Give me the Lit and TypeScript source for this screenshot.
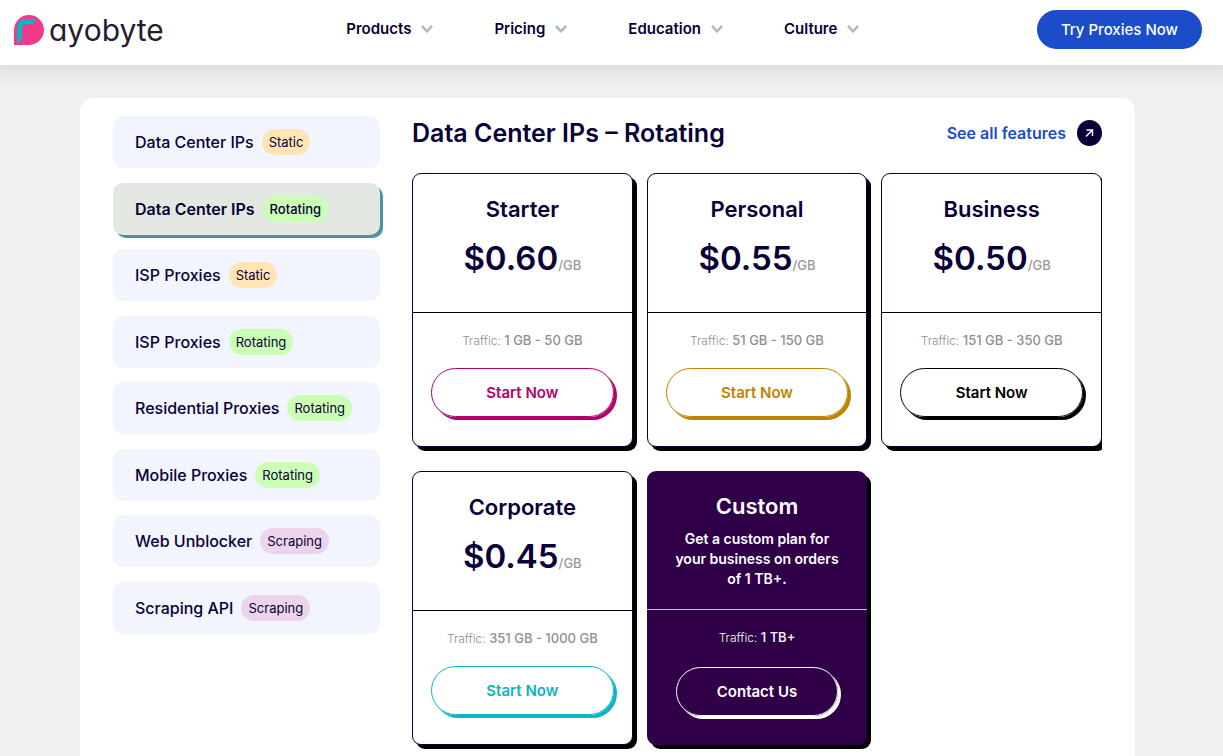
import { LitElement, html, css } from "lit";
import { customElement, property, state } from "lit/decorators.js";
import { classMap } from "lit/directives/class-map.js";

type Kind = "Static" | "Rotating" | "Scraping";

interface Product {
  name: string;
  kind: Kind;
}

interface Plan {
  name: string;
  price?: string;
  blurb?: string;
  traffic: string;
  action: string;
  tone: string;
}

const MENU = ["Products", "Pricing", "Education", "Culture"];

const PRODUCTS: Product[] = [
  { name: "Data Center IPs", kind: "Static" },
  { name: "Data Center IPs", kind: "Rotating" },
  { name: "ISP Proxies", kind: "Static" },
  { name: "ISP Proxies", kind: "Rotating" },
  { name: "Residential Proxies", kind: "Rotating" },
  { name: "Mobile Proxies", kind: "Rotating" },
  { name: "Web Unblocker", kind: "Scraping" },
  { name: "Scraping API", kind: "Scraping" },
];

const PLANS: Plan[] = [
  { name: "Starter", price: "$0.60", traffic: "1 GB - 50 GB", action: "Start Now", tone: "magenta" },
  { name: "Personal", price: "$0.55", traffic: "51 GB - 150 GB", action: "Start Now", tone: "gold" },
  { name: "Business", price: "$0.50", traffic: "151 GB - 350 GB", action: "Start Now", tone: "black" },
  { name: "Corporate", price: "$0.45", traffic: "351 GB - 1000 GB", action: "Start Now", tone: "teal" },
  {
    name: "Custom",
    blurb: "Get a custom plan for your business on orders of 1 TB+.",
    traffic: "1 TB+",
    action: "Contact Us",
    tone: "dark",
  },
];

@customElement("site-header")
export class SiteHeader extends LitElement {
  static styles = css`
    :host {
      display: block;
      position: relative;
      background: #fff;
      box-shadow: 0 -15px 25px 15px rgba(0, 0, 0, 0.14);
    }
    .bar {
      display: flex;
      align-items: center;
      justify-content: space-between;
      padding: 10px 21px 16px 14px;
    }
    .logo {
      display: flex;
      align-items: center;
      gap: 5px;
      color: #271c31;
      text-decoration: none;
    }
    .mark {
      display: block;
      width: 30px;
      height: 30px;
    }
    .word {
      font-size: 30px;
      line-height: 28px;
      font-feature-settings: "cv11";
    }
    .menu {
      display: flex;
      gap: 61px;
      padding: 0 0 2px 5px;
    }
    .item {
      display: flex;
      align-items: center;
      gap: 10px;
      padding: 0;
      border: 0;
      background: none;
      font: 600 15px/21px Inter, sans-serif;
      color: #080036;
      cursor: pointer;
    }
    .chevron {
      width: 12px;
      height: 8px;
      fill: none;
      stroke: #b9b9b9;
      stroke-width: 2.6;
    }
    .cta {
      padding: 0 24px;
      border-radius: 20px;
      background: #1b4dca;
      color: #fff;
      font-size: 15px;
      font-weight: 500;
      line-height: 39px;
      text-decoration: none;
      white-space: nowrap;
    }
  `;

  render() {
    return html`
      <header class="bar">
        <a class="logo" href="#" aria-label="Rayobyte home">
          <svg class="mark" viewBox="0 0 30 30" aria-hidden="true">
            <path fill="#f03a8c" d="M0 30V15A15 15 0 1 1 15 30Z" />
            <path
              fill="#0bb5c1"
              d="M3 27.4V13.5C3 7.5 6.2 4.2 12 4.2H21.8C21.8 7.4 19.8 9.2 16.6 9.2H13C9.7 9.2 8 10.8 8 14V22.8C8 25.7 6.2 27.4 3 27.4Z"
            />
          </svg>
          <span class="word">ayobyte</span>
        </a>
        <nav class="menu">
          ${MENU.map(
            (label) => html`
              <button class="item" type="button">
                ${label}
                <svg class="chevron" viewBox="0 0 12 8" aria-hidden="true">
                  <path d="M1 1L6 6.3L11 1" />
                </svg>
              </button>
            `
          )}
        </nav>
        <a class="cta" href="#">Try Proxies Now</a>
      </header>
    `;
  }
}

@customElement("product-list")
export class ProductList extends LitElement {
  @state() private selected = 1;

  static styles = css`
    :host {
      display: block;
    }
    .list {
      display: flex;
      flex-direction: column;
      justify-content: space-between;
      min-height: 518px;
    }
    .product {
      display: flex;
      align-items: center;
      gap: 8px;
      height: 52px;
      padding: 0 22px;
      border: 0;
      border-radius: 10px;
      background: #f2f4fe;
      color: #080036;
      font: 500 16px/24px Inter, sans-serif;
      text-align: left;
      white-space: nowrap;
      cursor: pointer;
    }
    .product.active {
      background: #e3e8e2;
      box-shadow: 3px 3px 0 #4d929f;
      font-weight: 600;
    }
    .tag {
      padding: 0 7px;
      border-radius: 13px;
      font-size: 13px;
      font-weight: 400;
      line-height: 26px;
    }
    .active .tag {
      font-weight: 500;
    }
    .static {
      background: #ffe5b4;
    }
    .rotating {
      background: #ccffb6;
    }
    .scraping {
      background: #ecd5ec;
    }
  `;

  render() {
    return html`
      <div class="list">
        ${PRODUCTS.map(
          (p, i) => html`
            <button
              type="button"
              class=${classMap({ product: true, active: i === this.selected })}
              @click=${() => (this.selected = i)}
            >
              <span>${p.name}</span><span class="tag ${p.kind.toLowerCase()}">${p.kind}</span>
            </button>
          `
        )}
      </div>
    `;
  }
}

@customElement("plan-card")
export class PlanCard extends LitElement {
  @property({ attribute: false }) plan!: Plan;

  static styles = css`
    :host {
      display: block;
    }
    .card {
      box-sizing: border-box;
      height: 100%;
      border: 1px solid #080036;
      border-radius: 9px;
      background: #fff;
      box-shadow: 4px 4px 0 #000;
      color: #080036;
      text-align: center;
    }
    .head {
      box-sizing: border-box;
      min-height: 139px;
      padding: 20px 18px;
      border-bottom: 1px solid #000;
    }
    .name {
      margin: 0;
      font-size: 22px;
      font-weight: 600;
      line-height: 30px;
    }
    .price {
      margin: 14px 0 0;
      font-size: 33px;
      font-weight: 600;
      line-height: 40px;
      white-space: nowrap;
    }
    .unit {
      color: #999;
      font-size: 13px;
      font-weight: 500;
    }
    .blurb {
      margin: 8px 0 0;
      padding: 0 8px;
      font-size: 14px;
      font-weight: 600;
      line-height: 20px;
    }
    .body {
      padding: 17px 18px 28px;
    }
    .traffic {
      margin: 0 0 17px;
      color: #8f8f8f;
      font-size: 13px;
      font-weight: 500;
      line-height: 20px;
      white-space: nowrap;
    }
    .label {
      font-size: 12px;
      font-weight: 300;
    }
    .action {
      display: block;
      border: 1px solid currentColor;
      border-radius: 25px;
      box-shadow: 3px 3px 0 currentColor;
      color: #fff;
      font-size: 15px;
      font-weight: 600;
      line-height: 47px;
      text-decoration: none;
    }
    .magenta .action {
      color: #b3006b;
    }
    .gold .action {
      color: #bf8300;
    }
    .black .action {
      color: #000;
    }
    .teal .action {
      color: #0bb5c1;
    }
    .dark {
      border: 0;
      background: #2f0047;
      color: #fff;
    }
    .dark .head {
      padding-bottom: 18px;
      border-color: #cbbfd1;
    }
    .dark .traffic {
      margin-bottom: 19px;
      color: #fff;
    }
    .dark .body {
      padding: 17px 29px 28px;
    }
  `;

  render() {
    const p = this.plan;
    return html`
      <article class="card ${p.tone}">
        <div class="head">
          <h3 class="name">${p.name}</h3>
          ${p.price
            ? html`<p class="price">${p.price}<span class="unit">/GB</span></p>`
            : html`<p class="blurb">${p.blurb}</p>`}
        </div>
        <div class="body">
          <p class="traffic"><span class="label">Traffic:</span> ${p.traffic}</p>
          <a class="action" href="#">${p.action}</a>
        </div>
      </article>
    `;
  }
}

@customElement("app-root")
export class AppRoot extends LitElement {
  static styles = css`
    :host {
      display: flex;
      flex-direction: column;
      min-height: 100vh;
      overflow: hidden;
      background: #f0f0f0;
      font-family: Inter, sans-serif;
    }
    .panel {
      display: grid;
      grid-template-columns: 267px minmax(0, 1fr);
      flex: 1;
      gap: 32px;
      align-items: start;
      margin: 33px 88px 0 80px;
      padding: 18px 33px 8px;
      border-radius: 13px 13px 0 0;
      background: #fff;
    }
    .top {
      display: flex;
      align-items: center;
      justify-content: space-between;
      margin-bottom: 23px;
    }
    .title {
      margin: 0;
      color: #080036;
      font-size: 25px;
      font-weight: 600;
      line-height: 34px;
    }
    .more {
      display: flex;
      align-items: center;
      gap: 11px;
      color: #1b4dca;
      font-size: 16px;
      font-weight: 600;
      line-height: 26px;
      text-decoration: none;
    }
    .arrow {
      width: 25px;
      height: 26px;
    }
    .plans {
      display: grid;
      grid-template-columns: repeat(3, minmax(0, 1fr));
      grid-auto-rows: minmax(274px, auto);
      gap: 24px 14px;
      overflow-x: clip;
    }
  `;

  render() {
    return html`
      <site-header></site-header>
      <main class="panel">
        <product-list></product-list>
        <section>
          <div class="top">
            <h2 class="title">Data Center IPs – Rotating</h2>
            <a class="more" href="#">
              See all features
              <svg class="arrow" viewBox="0 0 25 26" aria-hidden="true">
                <ellipse cx="12.5" cy="13" rx="12.5" ry="13" fill="#080036" />
                <path d="M9 16.5L15.5 10M9.5 10H15.5V16" fill="none" stroke="#fff" stroke-width="1.4" />
              </svg>
            </a>
          </div>
          <div class="plans">${PLANS.map((p) => html`<plan-card .plan=${p}></plan-card>`)}</div>
        </section>
      </main>
    `;
  }
}
